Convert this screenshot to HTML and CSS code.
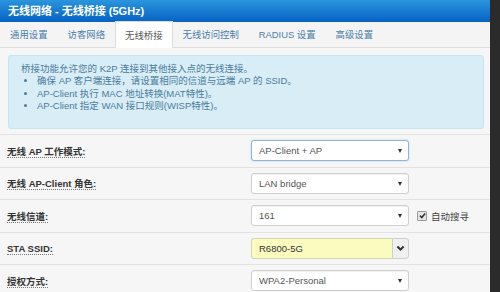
FILE: index.html
```html
<!DOCTYPE html>
<html lang="zh-CN">
<head>
    <meta charset="UTF-8">
    <title>无线网络 - 无线桥接 (5GHz)</title>
    <link rel="stylesheet" href="styles.css">
</head>
<body>

<div class="page">
    <div class="panel">
        <div class="panel-title">无线网络 - 无线桥接 (5GHz)</div>

        <ul class="tabs">
            <li>通用设置</li>
            <li>访客网络</li>
            <li class="active">无线桥接</li>
            <li>无线访问控制</li>
            <li>RADIUS 设置</li>
            <li>高级设置</li>
        </ul>

        <div class="alert">
            <p>桥接功能允许您的 K2P 连接到其他接入点的无线连接。</p>
            <ul>
                <li>确保 AP 客户端连接，请设置相同的信道与远端 AP 的 SSID。</li>
                <li>AP-Client 执行 MAC 地址转换(MAT特性)。</li>
                <li>AP-Client 指定 WAN 接口规则(WISP特性)。</li>
            </ul>
        </div>

        <div class="form">
            <div class="row">
                <label class="lbl"><span>无线 AP 工作模式:</span></label>
                <div class="select focus">AP-Client + AP</div>
            </div>
            <div class="row">
                <label class="lbl"><span>无线 AP-Client 角色:</span></label>
                <div class="select">LAN bridge</div>
            </div>
            <div class="row">
                <label class="lbl"><span>无线信道:</span></label>
                <div class="select">161</div>
                <div class="check">
                    <span class="box">
                        <svg width="7" height="7" viewBox="0 0 8 8"><path d="M1 4.2 L3.2 6.3 L7 1.6" fill="none" stroke="#333" stroke-width="1.8"/></svg>
                    </span>
                    自动搜寻
                </div>
            </div>
            <div class="row">
                <label class="lbl"><span>STA SSID:</span></label>
                <div class="input-group">
                    <div class="input">R6800-5G</div>
                    <div class="input-btn">
                        <svg width="9" height="7" viewBox="0 0 10 8"><path d="M1.5 1.8 L5 5.3 L8.5 1.8" fill="none" stroke="#333" stroke-width="2.4"/></svg>
                    </div>
                </div>
            </div>
            <div class="row">
                <label class="lbl"><span>授权方式:</span></label>
                <div class="select">WPA2-Personal</div>
            </div>
        </div>
    </div>
    <div class="side"></div>
</div>

</body>
</html>
```

FILE: styles.css
```css
/* Base */
html, body {
    margin: 0;
    padding: 0;
}
body {
    font-family: "Liberation Sans", "Noto Sans CJK SC", sans-serif;
    font-size: 9.5px;
    color: #333;
    background-color: #2b2b2b;
    width: 500px;
    height: 292px;
    overflow: hidden;
}
.page {
    display: flex;
    height: 292px;
}
.panel {
    width: 490px;
    background-color: #f6f6f6;
}
.side {
    flex: 1;
    background-color: #2b2b2b;
}

/* Title */
.panel-title {
    height: 22px;
    line-height: 22px;
    padding-left: 8px;
    color: #fff;
    font-weight: bold;
    font-size: 11px;
    background: linear-gradient(#2a95dc, #0662c4);
}

/* Tabs */
.tabs {
    display: flex;
    margin: 0;
    padding: 0;
    list-style: none;
    height: 25px;
    background-color: #f4f4f4;
    border-bottom: 1px solid #dcdcdc;
    font-size: 9.4px;
}
.tabs li {
    padding: 0 10px;
    line-height: 25px;
    color: #4a7eab;
}
.tabs li.active {
    padding: 0 9px;
    background-color: #fff;
    color: #555;
    border: 1px solid #dcdcdc;
    border-bottom: none;
    height: 26px;
    margin-top: -1px;
    line-height: 27px;
}

/* Alert */
.alert {
    margin: 7px 6px 0 8px;
    height: 58px;
    padding: 7px 12px 7px 12px;
    background-color: #d9edf7;
    border: 1px solid #c4e6f2;
    border-radius: 3px;
    color: #4b7c9c;
    line-height: 12.3px;
}
.alert p {
    margin: 0;
}
.alert ul {
    margin: 0;
    padding-left: 16px;
}

/* Form rows */
.form {
    margin-top: 5px;
}
.row {
    display: flex;
    align-items: center;
    height: 31.5px;
    border-top: 1px solid #e2e2e2;
}
.lbl {
    width: 244px;
    padding-left: 7px;
    font-weight: bold;
    font-size: 9.5px;
    color: #333;
}
.lbl span {
    border-bottom: 1px dotted #777;
}
.select {
    position: relative;
    box-sizing: border-box;
    width: 158px;
    height: 21px;
    line-height: 19px;
    padding-left: 7px;
    background-color: #fff;
    border: 1px solid #cfcfcf;
    border-radius: 3px;
    box-shadow: inset 0 1px 1px rgba(0, 0, 0, 0.06);
    color: #555;
}
.select::after {
    content: "";
    position: absolute;
    right: 6px;
    top: 8px;
    border-left: 2.5px solid transparent;
    border-right: 2.5px solid transparent;
    border-top: 4px solid #333;
}
.select.focus {
    border-color: #8fb4d8;
    box-shadow: 0 0 2px rgba(102, 175, 233, 0.5);
}

/* Checkbox */
.check {
    display: flex;
    align-items: center;
    margin-left: 8px;
    color: #444;
}
.box {
    display: inline-flex;
    align-items: center;
    justify-content: center;
    width: 8px;
    height: 8px;
    margin-right: 4px;
    background-color: #e6e6e6;
    border: 1px solid #999;
    border-radius: 1px;
}

/* SSID input */
.input-group {
    display: flex;
    width: 158px;
    height: 21px;
}
.input {
    box-sizing: border-box;
    flex: 1;
    height: 21px;
    line-height: 19px;
    padding-left: 7px;
    background-color: #fbfbbf;
    border: 1px solid #d5d5b0;
    border-right: none;
    border-radius: 3px 0 0 3px;
    color: #333;
}
.input-btn {
    box-sizing: border-box;
    width: 17px;
    height: 21px;
    display: flex;
    align-items: center;
    justify-content: center;
    background-color: #f0f0f0;
    border: 1px solid #cfcfcf;
    border-radius: 0 3px 3px 0;
}
```
